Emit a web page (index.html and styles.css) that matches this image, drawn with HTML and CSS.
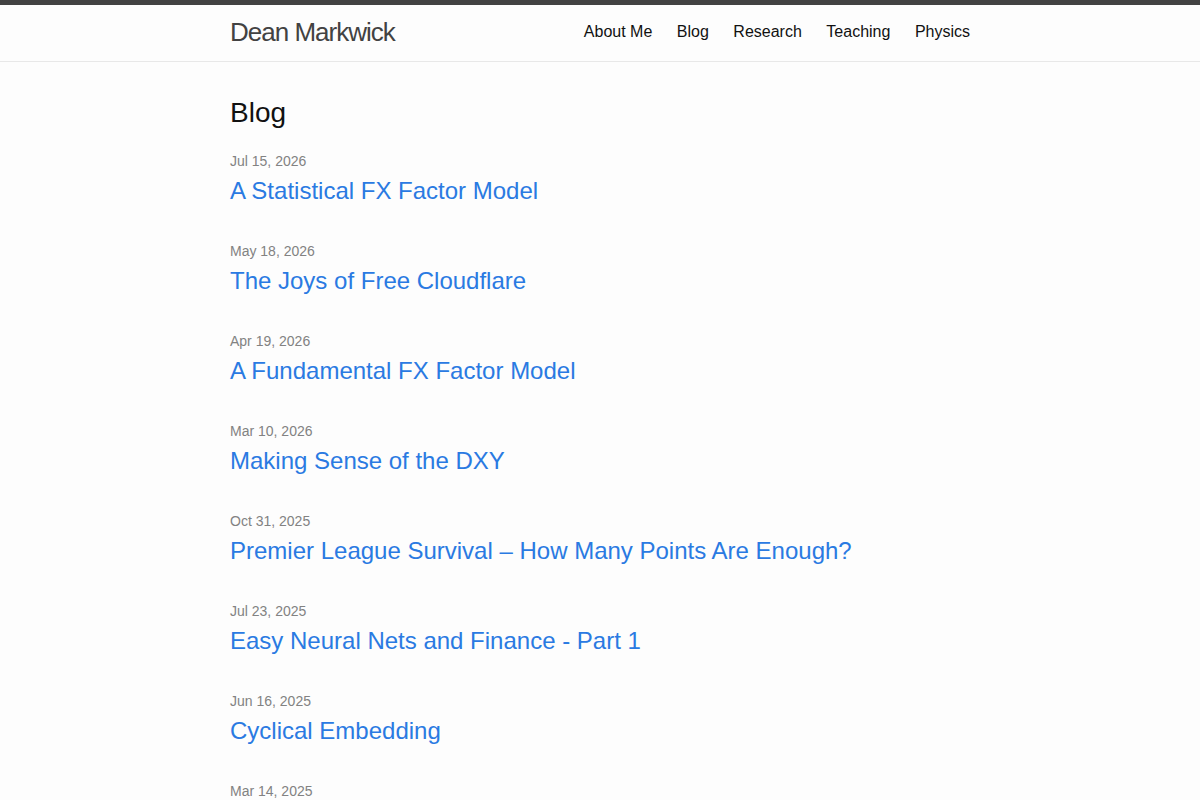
FILE: index.html
```html
<!DOCTYPE html>
<html>
<head>
  <title>Blog | Dean Markwick</title>
  <link rel="stylesheet" href="styles.css">
</head>
<body>
  <header class="site-header">
    <div class="wrapper header-inner">
      <a class="site-title" href="#">Dean Markwick</a>
      <nav class="site-nav">
        <a class="page-link" href="#">About Me</a>
        <a class="page-link" href="#">Blog</a>
        <a class="page-link" href="#">Research</a>
        <a class="page-link" href="#">Teaching</a>
        <a class="page-link" href="#">Physics</a>
      </nav>
    </div>
  </header>

  <main class="page-content">
    <div class="wrapper">
      <h2 class="post-list-heading">Blog</h2>
      <ul class="post-list">
        <li>
          <span class="post-meta">Jul 15, 2026</span>
          <h3><a class="post-link" href="#">A Statistical FX Factor Model</a></h3>
        </li>
        <li>
          <span class="post-meta">May 18, 2026</span>
          <h3><a class="post-link" href="#">The Joys of Free Cloudflare</a></h3>
        </li>
        <li>
          <span class="post-meta">Apr 19, 2026</span>
          <h3><a class="post-link" href="#">A Fundamental FX Factor Model</a></h3>
        </li>
        <li>
          <span class="post-meta">Mar 10, 2026</span>
          <h3><a class="post-link" href="#">Making Sense of the DXY</a></h3>
        </li>
        <li>
          <span class="post-meta">Oct 31, 2025</span>
          <h3><a class="post-link" href="#">Premier League Survival – How Many Points Are Enough?</a></h3>
        </li>
        <li>
          <span class="post-meta">Jul 23, 2025</span>
          <h3><a class="post-link" href="#">Easy Neural Nets and Finance - Part 1</a></h3>
        </li>
        <li>
          <span class="post-meta">Jun 16, 2025</span>
          <h3><a class="post-link" href="#">Cyclical Embedding</a></h3>
        </li>
        <li>
          <span class="post-meta">Mar 14, 2025</span>
          <h3><a class="post-link" href="#">Order Flow and Price Impact</a></h3>
        </li>
      </ul>
    </div>
  </main>
</body>
</html>
```

FILE: styles.css
```css
body {
  margin: 0;
  font-family: "Liberation Sans", Arial, sans-serif;
  font-size: 16px;
  line-height: 1.5;
  color: #111;
  background-color: #fdfdfd;
}

a {
  text-decoration: none;
}

.wrapper {
  max-width: 740px;
  margin: 0 auto;
  padding: 0 30px;
}

/* header */

.site-header {
  border-top: 5px solid #424242;
  border-bottom: 1px solid #e8e8e8;
  min-height: 56px;
}

.header-inner {
  display: flex;
  justify-content: space-between;
  align-items: flex-start;
  height: 56px;
}

.site-title {
  font-size: 26px;
  line-height: 54px;
  letter-spacing: -1px;
  color: #424242;
}

.site-nav {
  display: flex;
  gap: 24.5px;
  line-height: 54px;
}

.page-link {
  color: #111;
  font-size: 16px;
}

/* post list */

.page-content {
  padding: 30px 0;
}

.post-list-heading {
  font-size: 28px;
  font-weight: normal;
  line-height: 42px;
  margin: 0 0 17px;
}

.post-list {
  list-style: none;
  margin: 0;
  padding: 0;
}

.post-list li {
  margin-bottom: 32px;
}

.post-meta {
  display: block;
  font-size: 14px;
  line-height: 21px;
  color: #828282;
}

.post-list h3 {
  margin: 1px 0 0;
  font-size: 24px;
  font-weight: normal;
  line-height: 36px;
}

.post-link {
  color: #2a7ae2;
}
```
